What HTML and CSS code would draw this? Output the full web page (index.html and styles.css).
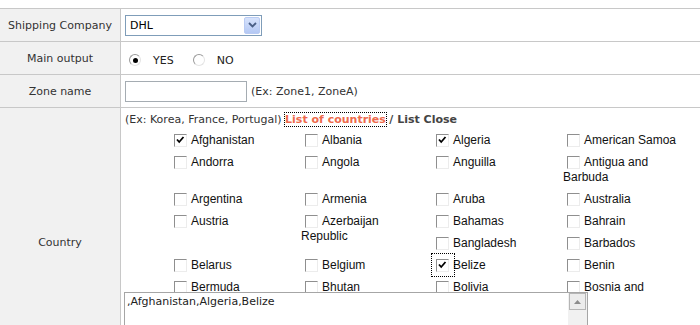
FILE: index.html
```html
<!DOCTYPE html>
<html>
<head>
<meta charset="utf-8">
<title>Shipping zone</title>
<link rel="stylesheet" href="styles.css">
</head>
<body>
<div class="form">
  <div class="lbl">Shipping Company</div>
  <div class="val">
    <div class="select">
      <span class="sel-text">DHL</span>
      <span class="sel-btn"><svg width="9" height="6" viewBox="0 0 9 6"><path d="M1 1 L4.5 4.5 L8 1" fill="none" stroke="#4a5f86" stroke-width="1.8"/></svg></span>
    </div>
  </div>

  <div class="lbl">Main output</div>
  <div class="val radios">
    <label class="radio"><span class="rb on"></span>YES</label>
    <label class="radio"><span class="rb"></span>NO</label>
  </div>

  <div class="lbl">Zone name</div>
  <div class="val">
    <input class="text" type="text">
    <span class="hint">(Ex: Zone1, ZoneA)</span>
  </div>

  <div class="lbl">Country</div>
  <div class="val country">
    <div class="help">(Ex: Korea, France, Portugal) <a class="link">List of countries</a> <b class="close">/ List Close</b></div>
    <div class="list">
      <label class="item"><span class="cb on"><svg width="13" height="13" viewBox="0 0 13 13"><path d="M3 5.5 L5.2 8 L9.5 3" fill="none" stroke="#000" stroke-width="1.8"/></svg></span>Afghanistan</label>
      <label class="item"><span class="cb"></span>Albania</label>
      <label class="item"><span class="cb on"><svg width="13" height="13" viewBox="0 0 13 13"><path d="M3 5.5 L5.2 8 L9.5 3" fill="none" stroke="#000" stroke-width="1.8"/></svg></span>Algeria</label>
      <label class="item"><span class="cb"></span>American Samoa</label>
      <label class="item"><span class="cb"></span>Andorra</label>
      <label class="item"><span class="cb"></span>Angola</label>
      <label class="item"><span class="cb"></span>Anguilla</label>
      <label class="item"><span class="cb"></span>Antigua and Barbuda</label>
      <label class="item"><span class="cb"></span>Argentina</label>
      <label class="item"><span class="cb"></span>Armenia</label>
      <label class="item"><span class="cb"></span>Aruba</label>
      <label class="item"><span class="cb"></span>Australia</label>
      <label class="item"><span class="cb"></span>Austria</label>
      <label class="item"><span class="cb"></span>Azerbaijan Republic</label>
      <label class="item"><span class="cb"></span>Bahamas</label>
      <label class="item"><span class="cb"></span>Bahrain</label>
      <label class="item"><span class="cb"></span>Bangladesh</label>
      <label class="item"><span class="cb"></span>Barbados</label>
      <label class="item"><span class="cb"></span>Belarus</label>
      <label class="item"><span class="cb"></span>Belgium</label>
      <label class="item"><span class="cb on focus"><svg width="13" height="13" viewBox="0 0 13 13"><path d="M3 5.5 L5.2 8 L9.5 3" fill="none" stroke="#000" stroke-width="1.8"/></svg></span>Belize</label>
      <label class="item"><span class="cb"></span>Benin</label>
      <label class="item"><span class="cb"></span>Bermuda</label>
      <label class="item"><span class="cb"></span>Bhutan</label>
      <label class="item"><span class="cb"></span>Bolivia</label>
      <label class="item"><span class="cb"></span>Bosnia and Herzegovina</label>
      <label class="item"><span class="cb"></span>Botswana</label>
      <label class="item"><span class="cb"></span>Brazil</label>
    </div>
    <div class="area">
      <textarea class="ta">,Afghanistan,Algeria,Belize</textarea>
      <div class="sb"><div class="sb-up"><svg width="7" height="4" viewBox="0 0 7 4"><path d="M0 4 L3.5 0 L7 4 Z" fill="#8c8c8c"/></svg></div></div>
    </div>
  </div>
</div>
</body>
</html>
```
FILE: styles.css
```css
* { box-sizing: border-box; }

body {
  margin: 8px 0 0 0;
  background: #fff;
  font-family: "DejaVu Sans", sans-serif;
  font-size: 11px;
  color: #333;
}

.form {
  display: grid;
  grid-template-columns: 121px 1fr;
  width: 700px;
  border-top: 1px solid #c8c8c8;
}

.lbl {
  background: #f1f1f1;
  border-right: 1px solid #c8c8c8;
  border-bottom: 1px solid #c8c8c8;
  min-height: 33px;
  display: flex;
  align-items: center;
  justify-content: center;
  color: #333;
}

.val {
  border-bottom: 1px solid #c8c8c8;
  height: 33px;
  padding-left: 4px;
  display: flex;
  align-items: center;
}

/* select */
.select {
  width: 137px;
  height: 21px;
  border: 1px solid #7f9db9;
  display: flex;
  align-items: center;
  justify-content: space-between;
  padding: 0 1px 0 4px;
  background: #fff;
}
.sel-text { color: #000; font-size: 11px; }
.sel-btn {
  width: 16px;
  height: 17px;
  background: linear-gradient(#d7e3fc, #b4c8f4);
  border: 1px solid #b9cbf3;
  border-radius: 2px;
  display: flex;
  align-items: center;
  justify-content: center;
}

/* radios */
.radios { padding-top: 4px; }
.radio {
  display: flex;
  align-items: center;
  margin-right: 15px;
  color: #222;
}
.rb {
  width: 12px;
  height: 12px;
  border-radius: 50%;
  border: 1px solid;
  border-color: #9a9a9a #e4e4e4 #e4e4e4 #9a9a9a;
  background: #fff;
  margin: 0 12px 0 4px;
  display: flex;
  align-items: center;
  justify-content: center;
}
.rb.on::after {
  content: "";
  width: 5px;
  height: 5px;
  border-radius: 50%;
  background: #000;
}

/* text input */
.text {
  width: 122px;
  height: 21px;
  margin: 0 4px 0 0;
  border: 1px solid #a5acb2;
  padding: 0 2px;
  font: inherit;
}
.hint { color: #333; }

/* country cell */
.val.country {
  display: block;
  height: auto;
  padding: 4px 0 4px 4px;
}
.help {
  line-height: 15px;
  height: 15px;
  color: #333;
  white-space: nowrap;
}
.link {
  color: #ee6a4c;
  font-weight: bold;
  outline: 1px dotted #000;
  outline-offset: 0;
}
.close { color: #444; }

.list {
  width: 524px;
  height: 162px;
  margin: 3px 0 0 45px;
  overflow: hidden;
}
.item {
  float: left;
  width: 131px;
  padding: 3px 4px 4px 0;
  line-height: 15px;
  font-family: "Liberation Sans", Arial, sans-serif;
  font-size: 12px;
  color: #111;
}
.cb {
  display: inline-block;
  width: 13px;
  height: 13px;
  vertical-align: top;
  margin: 1px 4px 0 4px;
  border: 1px solid;
  border-color: #8f8f8f #ececec #ececec #8f8f8f;
  background: #fff;
  position: relative;
}
.cb svg {
  position: absolute;
  left: -1px;
  top: -1px;
}
.cb.focus::before {
  content: "";
  position: absolute;
  left: -6px;
  top: -7px;
  width: 22px;
  height: 22px;
  border: 1px dotted #000;
}

/* textarea */
.area {
  width: 464px;
  height: 80px;
  margin-left: -1px;
  border: 1px solid #a6a6a6;
  display: flex;
  background: #fff;
}
.ta {
  flex: 1;
  border: 0;
  outline: 0;
  resize: none;
  padding: 2px 2px;
  font-family: "DejaVu Sans", sans-serif;
  font-size: 11px;
  line-height: 13px;
  color: #222;
  overflow: hidden;
}
.sb {
  width: 19px;
  background: #f1f1f1;
  padding: 0 1px;
}
.sb-up {
  height: 17px;
  border: 1px solid #b5b5b5;
  background: #ececec;
  display: flex;
  align-items: center;
  justify-content: center;
}
```
